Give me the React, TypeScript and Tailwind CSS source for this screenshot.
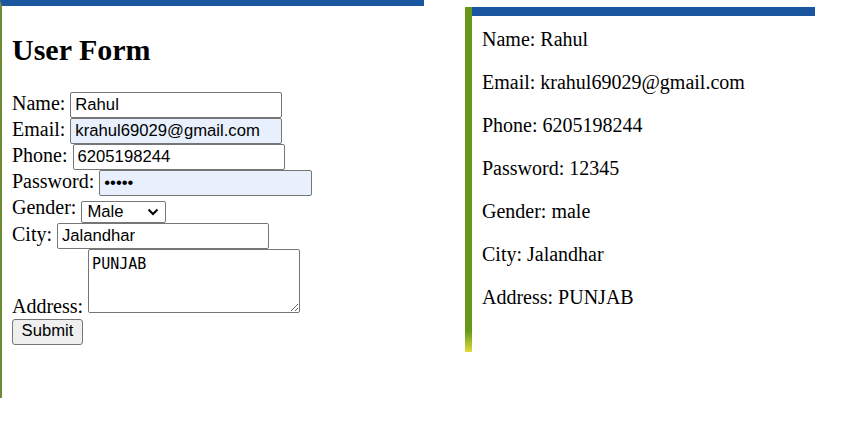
export default function App() {
  const field = "h-[26px] border border-[#767676] rounded-[2px] px-[4px] font-['Liberation_Sans',Arial,sans-serif] text-[16.67px] text-black outline-none align-baseline"

  return (
    <div className="flex w-[844px] h-[446px] bg-white font-['Liberation_Serif','Times_New_Roman',serif] text-black leading-[normal]">

      {/* left: the form */}
      <div className="w-[424px] h-[398px] border-l-2 border-t-[6px] border-l-[#6f8a34] border-t-[#1a55a0] pl-[10px]">
        <h2 className="mt-[27px] mb-[25px] text-[30px] font-bold leading-[34px]">User Form</h2>

        <div className="text-[20px]">
          <div>
            Name: <input readOnly defaultValue="Rahul" className={`${field} w-[212px] bg-white`} />
          </div>
          <div>
            Email: <input readOnly defaultValue="krahul69029@gmail.com" className={`${field} w-[212px] bg-[#e8f0fe]`} />
          </div>
          <div>
            Phone: <input readOnly defaultValue="6205198244" className={`${field} w-[212px] bg-white`} />
          </div>
          <div>
            Password: <input readOnly type="password" defaultValue="12345" className={`${field} w-[213px] bg-[#e8f0fe]`} />
          </div>
          <div>
            Gender:{" "}
            <span className="inline-flex items-center justify-between w-[85px] h-[22px] border border-[#767676] rounded-[2px] pl-[5px] pr-[6px] align-[-3px] font-['Liberation_Sans',Arial,sans-serif] text-[16.67px] leading-none">
              Male
              <svg width="12" height="8" viewBox="0 0 12 8" fill="none">
                <path d="M1.5 1.5 L6 6 L10.5 1.5" stroke="#000" strokeWidth="2" />
              </svg>
            </span>
          </div>
          <div>
            City: <input readOnly defaultValue="Jalandhar" className={`${field} w-[212px] bg-white`} />
          </div>
          <div>
            Address:{" "}
            <textarea
              readOnly
              defaultValue="PUNJAB"
              className="w-[212px] h-[64px] border border-[#767676] rounded-[2px] px-[3px] pt-[5px] pb-[2px] font-['DejaVu_Sans_Mono','Liberation_Mono',monospace] text-[15px] leading-[19px] outline-none align-baseline"
            />
          </div>
          <div>
            <button className="w-[71px] h-[26px] bg-[#efefef] border border-[#767676] rounded-[3px] font-['Liberation_Sans',Arial,sans-serif] text-[16.67px] leading-none">
              Submit
            </button>
          </div>
        </div>
      </div>

      {/* right: submitted values */}
      <div className="ml-[41px] mt-[7px] flex w-[350px] h-[345px]">
        <div className="w-[7px] bg-linear-to-b from-[#66991a] via-[#66991a] via-94% to-[#e0dc3a]" />
        <div className="flex-1 border-t-[9px] border-[#1a55a0] pl-[10px] pt-[12px] flex flex-col gap-[20px] text-[20px] leading-[23px]">
          <p>Name: Rahul</p>
          <p>Email: krahul69029@gmail.com</p>
          <p>Phone: 6205198244</p>
          <p>Password: 12345</p>
          <p>Gender: male</p>
          <p>City: Jalandhar</p>
          <p>Address: PUNJAB</p>
        </div>
      </div>

    </div>
  )
}
